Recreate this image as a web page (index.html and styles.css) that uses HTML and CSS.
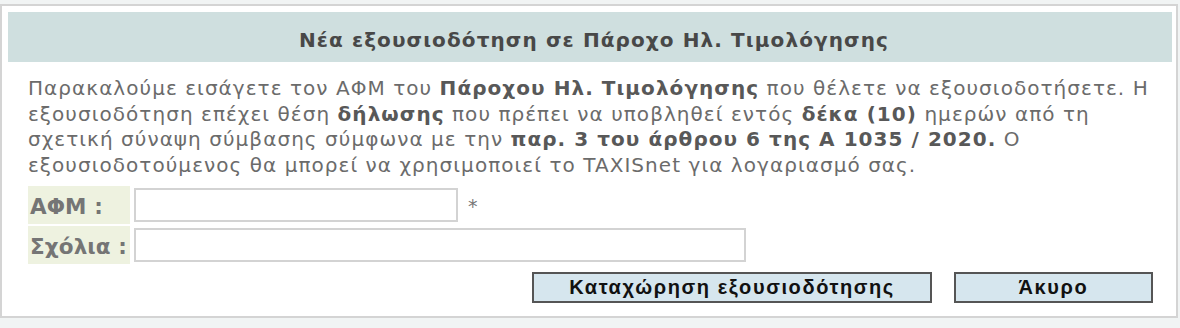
FILE: index.html
```html
<!DOCTYPE html>
<html lang="el">
<head>
<meta charset="utf-8">
<title>Νέα εξουσιοδότηση</title>
<link rel="stylesheet" href="styles.css">
</head>
<body>
<div class="box">
  <div class="header">Νέα εξουσιοδότηση σε Πάροχο Ηλ. Τιμολόγησης</div>
  <p class="intro">Παρακαλούμε εισάγετε τον ΑΦΜ του <b>Πάροχου Ηλ. Τιμολόγησης</b> που θέλετε να εξουσιοδοτήσετε. Η εξουσιοδότηση επέχει θέση <b>δήλωσης</b> που πρέπει να υποβληθεί εντός <b>δέκα (10)</b> ημερών από τη σχετική σύναψη σύμβασης σύμφωνα με την <b>παρ. 3 του άρθρου 6 της Α 1035 / 2020.</b> Ο εξουσιοδοτούμενος θα μπορεί να χρησιμοποιεί το TAXISnet για λογαριασμό σας.</p>
  <div class="form">
    <div class="row">
      <label class="label" for="afm">ΑΦΜ :</label>
      <input class="field field-short" id="afm" type="text">
      <span class="req">*</span>
    </div>
    <div class="row">
      <label class="label" for="notes">Σχόλια :</label>
      <input class="field field-long" id="notes" type="text">
    </div>
  </div>
  <div class="actions">
    <button class="btn btn-submit" type="button">Καταχώρηση εξουσιοδότησης</button>
    <button class="btn btn-cancel" type="button">Άκυρο</button>
  </div>
</div>
</body>
</html>
```
FILE: styles.css
```css
html, body {
  margin: 0;
  padding: 0;
}
body {
  background: #f1f4f4;
  padding-top: 4px;
  font-family: "DejaVu Sans", Verdana, sans-serif;
}
.box {
  width: 1178px;
  box-sizing: border-box;
  background: #ffffff;
  border: 2px solid #d4d4d4;
  padding: 6px 4px 13px 6px;
}
.header {
  height: 50px;
  box-sizing: border-box;
  background: #cfdfdf;
  color: #484848;
  font-weight: bold;
  font-size: 20px;
  letter-spacing: 1.1px;
  display: flex;
  align-items: center;
  justify-content: center;
  padding: 5px 0 0 8px;
}
.intro {
  margin: 14px 12px 8px 20px;
  color: #6b6b6b;
  font-size: 20px;
  letter-spacing: 1.05px;
  line-height: 25.5px;
}
.intro b {
  color: #585858;
}
.form {
  margin-left: 20px;
  display: flex;
  flex-direction: column;
  gap: 2px;
}
.row {
  display: flex;
  align-items: center;
  gap: 4px;
  height: 38px;
}
.label {
  width: 102px;
  height: 38px;
  box-sizing: border-box;
  background: #eef2e0;
  color: #757575;
  font-weight: bold;
  font-size: 21.5px;
  letter-spacing: 0.1px;
  white-space: nowrap;
  display: flex;
  align-items: center;
  padding: 2px 0 0 2px;
}
.field {
  height: 34px;
  box-sizing: border-box;
  border: 2px solid #d3d3d3;
  background: #fff;
  margin: 0;
  padding: 0 4px;
  font-size: 16px;
}
.field-short {
  width: 324px;
}
.field-long {
  width: 612px;
}
.req {
  color: #777;
  font-size: 19px;
  margin-left: 6px;
  margin-top: 2px;
}
.actions {
  display: flex;
  justify-content: flex-end;
  gap: 22px;
  margin-top: 8px;
  padding-right: 19px;
}
.btn {
  height: 31px;
  box-sizing: border-box;
  border: 2px solid #555555;
  background: #d6e6ee;
  color: #111111;
  font-family: "Liberation Sans", Arial, sans-serif;
  font-weight: bold;
  font-size: 20px;
  letter-spacing: 1.6px;
  padding: 0;
  margin: 0;
}
.btn-submit {
  width: 400px;
}
.btn-cancel {
  width: 199px;
}
```
